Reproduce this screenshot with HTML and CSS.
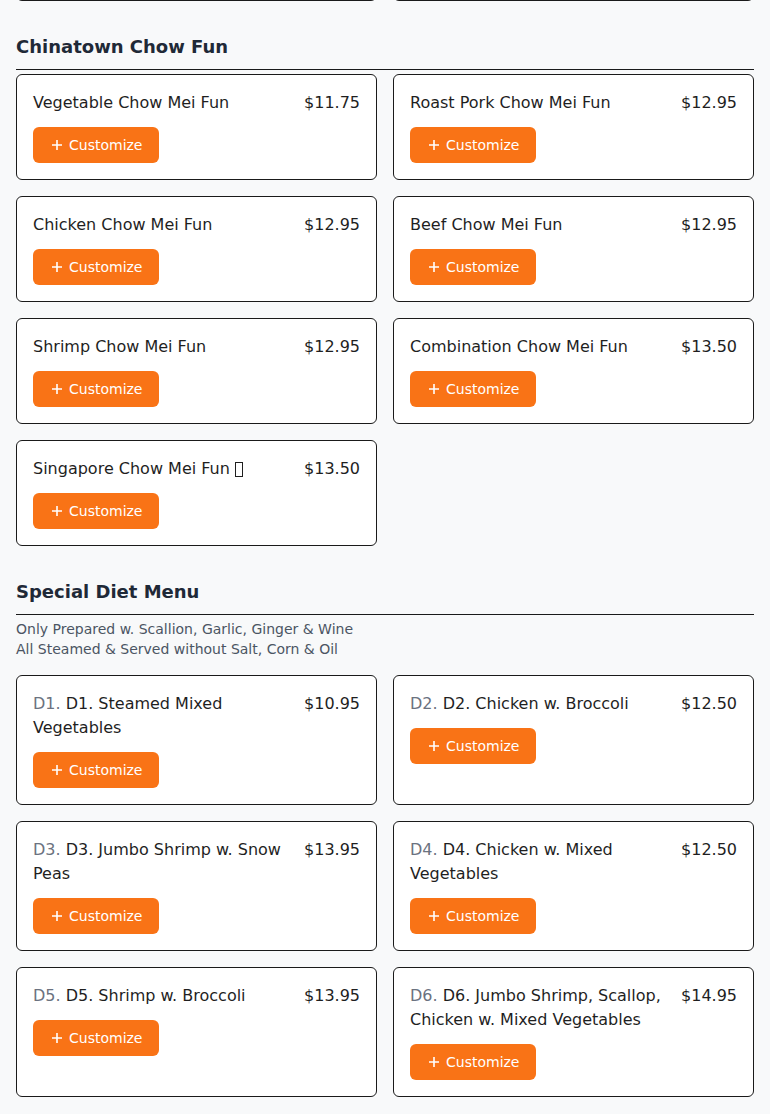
FILE: index.html
```html
<!DOCTYPE html>
<html lang="en">
<head>
    <meta charset="UTF-8">
    <meta name="viewport" content="width=device-width, initial-scale=1.0">
    <title>Menu</title>
    <link rel="stylesheet" href="styles.css">
</head>
<body>
    <div class="menu">
        <div class="clip">
            <div class="grid">
                <div class="card card-tail"></div>
                <div class="card card-tail"></div>
            </div>
        </div>

        <section class="section">
            <h2 class="section-title">Chinatown Chow Fun</h2>
            <div class="grid">
                <div class="card">
                    <div class="item-head">
                        <span class="item-name">Vegetable Chow Mei Fun</span>
                        <span class="item-price">$11.75</span>
                    </div>
                    <button class="btn-customize"><svg viewBox="0 0 12 12"><path d="M6 1v10M1 6h10"/></svg>Customize</button>
                </div>
                <div class="card">
                    <div class="item-head">
                        <span class="item-name">Roast Pork Chow Mei Fun</span>
                        <span class="item-price">$12.95</span>
                    </div>
                    <button class="btn-customize"><svg viewBox="0 0 12 12"><path d="M6 1v10M1 6h10"/></svg>Customize</button>
                </div>
                <div class="card">
                    <div class="item-head">
                        <span class="item-name">Chicken Chow Mei Fun</span>
                        <span class="item-price">$12.95</span>
                    </div>
                    <button class="btn-customize"><svg viewBox="0 0 12 12"><path d="M6 1v10M1 6h10"/></svg>Customize</button>
                </div>
                <div class="card">
                    <div class="item-head">
                        <span class="item-name">Beef Chow Mei Fun</span>
                        <span class="item-price">$12.95</span>
                    </div>
                    <button class="btn-customize"><svg viewBox="0 0 12 12"><path d="M6 1v10M1 6h10"/></svg>Customize</button>
                </div>
                <div class="card">
                    <div class="item-head">
                        <span class="item-name">Shrimp Chow Mei Fun</span>
                        <span class="item-price">$12.95</span>
                    </div>
                    <button class="btn-customize"><svg viewBox="0 0 12 12"><path d="M6 1v10M1 6h10"/></svg>Customize</button>
                </div>
                <div class="card">
                    <div class="item-head">
                        <span class="item-name">Combination Chow Mei Fun</span>
                        <span class="item-price">$13.50</span>
                    </div>
                    <button class="btn-customize"><svg viewBox="0 0 12 12"><path d="M6 1v10M1 6h10"/></svg>Customize</button>
                </div>
                <div class="card">
                    <div class="item-head">
                        <span class="item-name">Singapore Chow Mei Fun <span class="item-mark"></span></span>
                        <span class="item-price">$13.50</span>
                    </div>
                    <button class="btn-customize"><svg viewBox="0 0 12 12"><path d="M6 1v10M1 6h10"/></svg>Customize</button>
                </div>
            </div>
        </section>

        <section class="section">
            <h2 class="section-title">Special Diet Menu</h2>
            <p class="section-note">Only Prepared w. Scallion, Garlic, Ginger &amp; Wine<br>All Steamed &amp; Served without Salt, Corn &amp; Oil</p>
            <div class="grid">
                <div class="card">
                    <div class="item-head">
                        <span class="item-name"><span class="item-code">D1.</span> D1. Steamed Mixed Vegetables</span>
                        <span class="item-price">$10.95</span>
                    </div>
                    <button class="btn-customize"><svg viewBox="0 0 12 12"><path d="M6 1v10M1 6h10"/></svg>Customize</button>
                </div>
                <div class="card">
                    <div class="item-head">
                        <span class="item-name"><span class="item-code">D2.</span> D2. Chicken w. Broccoli</span>
                        <span class="item-price">$12.50</span>
                    </div>
                    <button class="btn-customize"><svg viewBox="0 0 12 12"><path d="M6 1v10M1 6h10"/></svg>Customize</button>
                </div>
                <div class="card">
                    <div class="item-head">
                        <span class="item-name"><span class="item-code">D3.</span> D3. Jumbo Shrimp w. Snow Peas</span>
                        <span class="item-price">$13.95</span>
                    </div>
                    <button class="btn-customize"><svg viewBox="0 0 12 12"><path d="M6 1v10M1 6h10"/></svg>Customize</button>
                </div>
                <div class="card">
                    <div class="item-head">
                        <span class="item-name"><span class="item-code">D4.</span> D4. Chicken w. Mixed Vegetables</span>
                        <span class="item-price">$12.50</span>
                    </div>
                    <button class="btn-customize"><svg viewBox="0 0 12 12"><path d="M6 1v10M1 6h10"/></svg>Customize</button>
                </div>
                <div class="card">
                    <div class="item-head">
                        <span class="item-name"><span class="item-code">D5.</span> D5. Shrimp w. Broccoli</span>
                        <span class="item-price">$13.95</span>
                    </div>
                    <button class="btn-customize"><svg viewBox="0 0 12 12"><path d="M6 1v10M1 6h10"/></svg>Customize</button>
                </div>
                <div class="card">
                    <div class="item-head">
                        <span class="item-name"><span class="item-code">D6.</span> D6. Jumbo Shrimp, Scallop, Chicken w. Mixed Vegetables</span>
                        <span class="item-price">$14.95</span>
                    </div>
                    <button class="btn-customize"><svg viewBox="0 0 12 12"><path d="M6 1v10M1 6h10"/></svg>Customize</button>
                </div>
            </div>
        </section>
    </div>
</body>
</html>
```

FILE: styles.css
```css
body {
    margin: 0;
    font-family: "DejaVu Sans", sans-serif;
    background-color: #f8f9fa;
    color: #1f2937;
}
.menu {
    padding: 0 16px 32px;
}
.clip {
    height: 1px;
    overflow: hidden;
    display: flex;
    flex-direction: column;
    justify-content: flex-end;
}
.card-tail {
    height: 40px;
    flex-shrink: 0;
}
.section {
    margin-top: 32px;
}
.section-title {
    margin: 0 0 4px;
    font-size: 18px;
    line-height: 28px;
    font-weight: bold;
    color: #1f2937;
    padding-bottom: 8px;
    border-bottom: 1px solid #1a1a1a;
}
.section-note {
    margin: 4px 0 16px;
    font-size: 14px;
    line-height: 20px;
    color: #4b5563;
}
.grid {
    display: grid;
    grid-template-columns: 1fr 1fr;
    gap: 16px;
}
.card {
    background-color: white;
    border: 1px solid #1a1a1a;
    border-radius: 6px;
    padding: 16px;
    display: flex;
    flex-direction: column;
    align-items: flex-start;
}
.item-head {
    display: flex;
    justify-content: space-between;
    gap: 16px;
    width: 100%;
    font-size: 16px;
    line-height: 24px;
    color: #1f1f1f;
}
.item-code {
    color: #6b7280;
}
.item-mark {
    display: inline-block;
    width: 8px;
    height: 15px;
    box-sizing: border-box;
    border: 1px solid #1f1f1f;
    vertical-align: -3px;
}
.item-price {
    white-space: nowrap;
}
.btn-customize {
    margin-top: 12px;
    display: flex;
    align-items: center;
    gap: 6px;
    height: 36px;
    padding: 0 16px 0 18px;
    background-color: #f97316;
    color: white;
    border: none;
    border-radius: 6px;
    font-family: inherit;
    font-size: 14px;
    cursor: pointer;
}
.btn-customize svg {
    width: 12px;
    height: 12px;
    stroke: white;
    stroke-width: 1.6;
    fill: none;
}
```
